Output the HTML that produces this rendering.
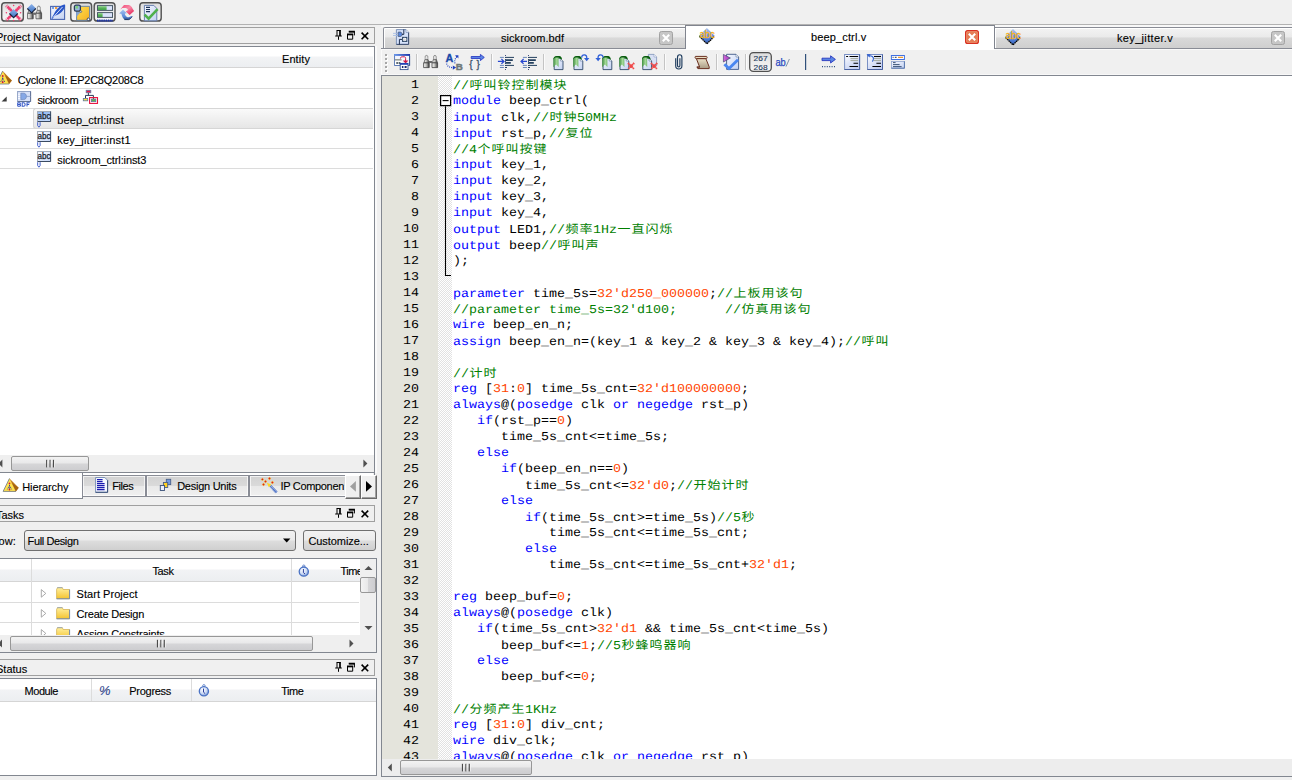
<!DOCTYPE html>
<html><head><meta charset="utf-8"><title>Quartus II</title><style>
*{box-sizing:border-box;margin:0;padding:0}
html,body{width:1292px;height:780px;overflow:hidden;background:#f0f0f0}
body{position:relative;font-family:"Liberation Sans",sans-serif;font-size:11px;color:#000}
.a{position:absolute}
.t{position:absolute;white-space:pre;line-height:14px;height:14px;font-size:11px;-webkit-text-stroke:0.12px #000}
.hl{position:absolute;height:1px}
.vl{position:absolute;width:1px}
.code{position:absolute;left:453px;white-space:pre;font-family:"Liberation Mono",monospace;font-size:13.333px;line-height:16px;height:16px;color:#000;transform:scaleY(0.9);transform-origin:0 11px;text-rendering:geometricPrecision}
.ln{position:absolute;left:383px;width:36px;text-align:right;white-space:pre;font-family:"Liberation Mono",monospace;font-size:13.333px;line-height:16px;height:16px;color:#000;transform:scaleY(0.9);transform-origin:0 11px;text-rendering:geometricPrecision}
.k{color:#0000ff}.c{color:#008000}.n{color:#ff4500}
.z{display:inline-block;width:14px;text-align:center;font-family:"Liberation Mono","Noto Sans CJK SC",monospace;font-size:13px;line-height:16px}
.hdr{position:absolute;background:linear-gradient(#fff 0,#fff 45%,#f2f3f5 50%,#eceef1 100%)}
.thumb{position:absolute;border:1px solid #979797;border-radius:2px;background:linear-gradient(#f3f3f3 0,#e8e8e9 48%,#d6d6d8 52%,#cdcdd0 100%)}
.vthumb{position:absolute;border:1px solid #979797;border-radius:2px;background:linear-gradient(90deg,#f3f3f3 0,#e8e8e9 48%,#d6d6d8 52%,#cdcdd0 100%)}
.tab{position:absolute;border:1px solid #898c95;border-bottom:none;background:linear-gradient(#f3f3f3 0,#eaeaea 43%,#d9d9d9 47%,#cecece 100%);box-shadow:inset 1px 1px 0 #fff}
.btab{position:absolute;border:1px solid #898c95;background:linear-gradient(#d2d2d2 0,#dadada 48%,#e9e9e9 52%,#f0f0f0 100%);box-shadow:inset 1px 1px 0 rgba(255,255,255,.7),inset -1px -1px 0 rgba(255,255,255,.7)}
svg{position:absolute;overflow:visible}
</style></head><body><div class="hl" style="left:0px;top:24px;width:1292px;background:#b2b2b2"></div><div class="a" style="left:-2px;top:27px;width:377px;height:17px;border:1px solid #a0a0a0;"></div><div class="t" style="left:-4px;top:30px;">Project Navigator</div><svg class="a" style="left:335px;top:30px" width="36" height="11" viewBox="0 0 36 11"><path d="M1.9 0.5h3.6M2 0v6M0.2 6h6.6M3.5 6.4v3.4" stroke="#000" stroke-width="1" fill="none"/><path d="M5 0v6" stroke="#000" stroke-width="1.7" fill="none"/><path d="M14.2 1.8h5.2v3.6M12.5 4.6h5.2v4.6h-5.2z" stroke="#000" stroke-width="1" fill="none"/><path d="M13.7 1.6h6.2M12 4.4h6.2" stroke="#000" stroke-width="1.8" fill="none"/><path d="M26.6 2.6l6.6 6.6M33.2 2.6l-6.6 6.6" stroke="#000" stroke-width="1.6" fill="none"/></svg><div class="a" style="left:-2px;top:46px;width:377px;height:427px;border:1px solid #828790;background:#fff"></div><div class="hdr" style="left:0px;top:47px;width:373px;height:20px;"></div><div class="hl" style="left:0px;top:67px;width:373px;background:#d5d5d5"></div><div class="t" style="left:282px;top:52px;letter-spacing:0.082px;">Entity</div><div class="hl" style="left:0px;top:88px;width:373px;background:#dcdcdc"></div><div class="hl" style="left:0px;top:108px;width:373px;background:#dcdcdc"></div><div class="hl" style="left:0px;top:128px;width:373px;background:#dcdcdc"></div><div class="hl" style="left:0px;top:148px;width:373px;background:#dcdcdc"></div><div class="hl" style="left:0px;top:168px;width:373px;background:#dcdcdc"></div><div class="a" style="left:33px;top:108px;width:340px;height:21px;border:1px solid #d6d6d6;border-right:none;border-radius:3px 0 0 3px;background:linear-gradient(#fafafa,#e6e6e6)"></div><div class="t" style="left:17.8px;top:73px;letter-spacing:-0.232px;">Cyclone II: EP2C8Q208C8</div><div class="t" style="left:37.5px;top:93px;letter-spacing:-0.4px;">sickroom</div><div class="t" style="left:57.3px;top:113px;letter-spacing:0.077px;">beep_ctrl:inst</div><div class="t" style="left:57.3px;top:133px;letter-spacing:0.2px;">key_jitter:inst1</div><div class="t" style="left:57.3px;top:153px;letter-spacing:-0.109px;">sickroom_ctrl:inst3</div><div class="a" style="left:0px;top:455px;width:374px;height:17px;background:#efefef"></div><div class="thumb" style="left:11px;top:456px;width:78px;height:15px;"></div><div class="a" style="left:83px;top:473px;width:290px;height:2px;background:#fff"></div><div class="hl" style="left:0px;top:472px;width:373px;background:#828790"></div><div class="vl" style="left:374px;top:472px;height:3px;background:#828790"></div><div class="a" style="left:-2px;top:473px;width:85px;height:26px;border:1px solid #828790;border-top:none;background:#fff"></div><div class="btab" style="left:82px;top:475px;width:64px;height:22px;"></div><div class="btab" style="left:146px;top:475px;width:103px;height:22px;"></div><div class="btab" style="left:249px;top:475px;width:97px;height:22px;border-right:none"></div><div class="t" style="left:22.3px;top:480px;letter-spacing:-0.118px;">Hierarchy</div><div class="t" style="left:112.3px;top:479px;letter-spacing:-0.445px;">Files</div><div class="t" style="left:177.2px;top:479px;letter-spacing:-0.263px;">Design Units</div><div class="t" style="left:280.5px;top:479px;letter-spacing:-0.324px;">IP Componen</div><div class="a" style="left:345px;top:475px;width:16px;height:24px;background:#f0f0f0;border-top:1px solid #fff;border-left:1px solid #fff;border-right:1px solid #696969;border-bottom:1px solid #696969"></div><div class="a" style="left:346px;top:476px;width:14px;height:22px;border-right:1px solid #a0a0a0;border-bottom:1px solid #a0a0a0"></div><div class="a" style="left:361px;top:475px;width:16px;height:24px;background:#f0f0f0;border-top:1px solid #fff;border-left:1px solid #fff;border-right:1px solid #696969;border-bottom:1px solid #696969"></div><div class="a" style="left:362px;top:476px;width:14px;height:22px;border-right:1px solid #a0a0a0;border-bottom:1px solid #a0a0a0"></div><div class="a" style="left:375px;top:46px;width:2px;height:427px;background:#fafafa"></div><div class="a" style="left:-2px;top:505px;width:377px;height:17px;border:1px solid #a0a0a0;"></div><div class="t" style="left:-4px;top:508px;">Tasks</div><svg class="a" style="left:335px;top:508px" width="36" height="11" viewBox="0 0 36 11"><path d="M1.9 0.5h3.6M2 0v6M0.2 6h6.6M3.5 6.4v3.4" stroke="#000" stroke-width="1" fill="none"/><path d="M5 0v6" stroke="#000" stroke-width="1.7" fill="none"/><path d="M14.2 1.8h5.2v3.6M12.5 4.6h5.2v4.6h-5.2z" stroke="#000" stroke-width="1" fill="none"/><path d="M13.7 1.6h6.2M12 4.4h6.2" stroke="#000" stroke-width="1.8" fill="none"/><path d="M26.6 2.6l6.6 6.6M33.2 2.6l-6.6 6.6" stroke="#000" stroke-width="1.6" fill="none"/></svg><div class="t" style="left:-1.5px;top:534px;letter-spacing:0.128px;">ow:</div><div class="a" style="left:24px;top:530px;width:272px;height:21px;border:1px solid #707070;border-radius:3px;background:linear-gradient(#f2f2f2 0,#ebebeb 48%,#dddddd 52%,#cfcfcf 100%)"></div><div class="t" style="left:27.6px;top:534px;letter-spacing:-0.384px;">Full Design</div><div class="a" style="left:303px;top:530px;width:73px;height:21px;border:1px solid #707070;border-radius:3px;background:linear-gradient(#f2f2f2 0,#ebebeb 48%,#dddddd 52%,#cfcfcf 100%)"></div><div class="t" style="left:308.4px;top:534px;letter-spacing:-0.061px;">Customize...</div><div class="a" style="left:-2px;top:558px;width:379px;height:95px;border:1px solid #828790;background:#fff"></div><div class="hdr" style="left:0px;top:559px;width:360px;height:22px;"></div><div class="hl" style="left:0px;top:581px;width:360px;background:#d5d5d5"></div><div class="vl" style="left:31px;top:559px;height:76px;background:#dcdcdc"></div><div class="vl" style="left:291px;top:559px;height:76px;background:#dcdcdc"></div><div class="hl" style="left:0px;top:602px;width:359px;background:#dcdcdc"></div><div class="hl" style="left:0px;top:622px;width:359px;background:#dcdcdc"></div><div class="t" style="left:152.5px;top:564px;letter-spacing:-0.404px;">Task</div><div class="t" style="left:340.4px;top:564px;letter-spacing:-0.509px;">Time</div><div class="t" style="left:76.6px;top:587px;letter-spacing:0.037px;">Start Project</div><div class="t" style="left:76.6px;top:607px;letter-spacing:-0.216px;">Create Design</div><div class="a" style="left:0px;top:623px;width:359px;height:12px;overflow:hidden"><div class="t" style="left:76.6px;top:4px;letter-spacing:-0.206px">Assign Constraints</div></div><div class="a" style="left:360px;top:559px;width:16px;height:76px;background:#efefef"></div><div class="vthumb" style="left:360px;top:577px;width:16px;height:16px;"></div><div class="a" style="left:0px;top:635px;width:376px;height:17px;background:#efefef"></div><div class="thumb" style="left:10px;top:636px;width:303px;height:15px;"></div><div class="a" style="left:-2px;top:659px;width:377px;height:17px;border:1px solid #a0a0a0;"></div><div class="t" style="left:-4px;top:662px;">Status</div><svg class="a" style="left:335px;top:662px" width="36" height="11" viewBox="0 0 36 11"><path d="M1.9 0.5h3.6M2 0v6M0.2 6h6.6M3.5 6.4v3.4" stroke="#000" stroke-width="1" fill="none"/><path d="M5 0v6" stroke="#000" stroke-width="1.7" fill="none"/><path d="M14.2 1.8h5.2v3.6M12.5 4.6h5.2v4.6h-5.2z" stroke="#000" stroke-width="1" fill="none"/><path d="M13.7 1.6h6.2M12 4.4h6.2" stroke="#000" stroke-width="1.8" fill="none"/><path d="M26.6 2.6l6.6 6.6M33.2 2.6l-6.6 6.6" stroke="#000" stroke-width="1.6" fill="none"/></svg><div class="a" style="left:-2px;top:678px;width:379px;height:98px;border:1px solid #828790;background:#fff"></div><div class="hdr" style="left:0px;top:679px;width:376px;height:22px;"></div><div class="hl" style="left:0px;top:701px;width:376px;background:#d5d5d5"></div><div class="vl" style="left:91px;top:679px;height:22px;background:#dcdcdc"></div><div class="vl" style="left:191px;top:679px;height:22px;background:#dcdcdc"></div><div class="t" style="left:24.5px;top:684px;letter-spacing:-0.429px;">Module</div><div class="t" style="left:129.3px;top:684px;letter-spacing:-0.289px;">Progress</div><div class="t" style="left:281.3px;top:684px;letter-spacing:-0.509px;">Time</div><div class="t" style="left:99px;top:684px;color:#3a55b0;font-style:italic;font-size:13px">%</div><div class="a" style="left:381px;top:25px;width:911px;height:2px;background:#f8f8f8"></div><div class="tab" style="left:383px;top:27px;width:303px;height:22px;border-radius:2px 0 0 0"></div><div class="tab" style="left:994px;top:27px;width:300px;height:22px;"></div><div class="hl" style="left:381px;top:48px;width:911px;background:#898c95"></div><div class="a" style="left:685px;top:25px;width:310px;height:25px;border:1px solid #80848e;border-bottom:none;background:#fff"></div><div class="t" style="left:501px;top:31px;letter-spacing:0.054px;">sickroom.bdf</div><div class="t" style="left:811px;top:30px;letter-spacing:0.136px;">beep_ctrl.v</div><div class="t" style="left:1117px;top:31px;letter-spacing:0.336px;">key_jitter.v</div><div class="a" style="left:381px;top:49px;width:911px;height:26px;background:#f0f0f0"></div><div class="a" style="left:381px;top:49px;width:911px;height:1px;background:#fafafa"></div><div class="a" style="left:381px;top:49px;width:1px;height:25px;background:#fafafa"></div><div class="a" style="left:686px;top:49px;width:308px;height:1px;background:#fff"></div><div class="a" style="left:381px;top:74px;width:911px;height:1px;background:#f8f8f8"></div><div class="a" style="left:381px;top:75px;width:913px;height:702px;border:1px solid #828790;background:#fff"></div><div class="a" style="left:382px;top:76px;width:56px;height:683px;background:#e4e4dc"></div><div class="a" style="left:438px;top:76px;width:14px;height:683px;background:repeating-conic-gradient(#e2e2e2 0 25%,#ffffff 0 50%) 0 0/2px 2px"></div><div class="a" style="left:382px;top:759px;width:910px;height:17px;background:#ededed"></div><div class="thumb" style="left:400px;top:760px;width:132px;height:15px;"></div><div class="a" style="left:382px;top:76px;width:910px;height:683px;overflow:hidden;left:0;top:0;width:1292px;height:759px;background:none"><div class="ln" style="top:78px">1</div><div class="code" style="top:78px"><span class="c">//<span class="z">呼</span><span class="z">叫</span><span class="z">铃</span><span class="z">控</span><span class="z">制</span><span class="z">模</span><span class="z">块</span></span></div><div class="ln" style="top:94px">2</div><div class="code" style="top:94px"><span class="k">module</span> beep_ctrl(</div><div class="ln" style="top:110px">3</div><div class="code" style="top:110px"><span class="k">input</span> clk,<span class="c">//<span class="z">时</span><span class="z">钟</span>50MHz</span></div><div class="ln" style="top:126px">4</div><div class="code" style="top:126px"><span class="k">input</span> rst_p,<span class="c">//<span class="z">复</span><span class="z">位</span></span></div><div class="ln" style="top:142px">5</div><div class="code" style="top:142px"><span class="c">//4<span class="z">个</span><span class="z">呼</span><span class="z">叫</span><span class="z">按</span><span class="z">键</span></span></div><div class="ln" style="top:158px">6</div><div class="code" style="top:158px"><span class="k">input</span> key_1,</div><div class="ln" style="top:174px">7</div><div class="code" style="top:174px"><span class="k">input</span> key_2,</div><div class="ln" style="top:190px">8</div><div class="code" style="top:190px"><span class="k">input</span> key_3,</div><div class="ln" style="top:206px">9</div><div class="code" style="top:206px"><span class="k">input</span> key_4,</div><div class="ln" style="top:222px">10</div><div class="code" style="top:222px"><span class="k">output</span> LED1,<span class="c">//<span class="z">频</span><span class="z">率</span>1Hz<span class="z">一</span><span class="z">直</span><span class="z">闪</span><span class="z">烁</span></span></div><div class="ln" style="top:238px">11</div><div class="code" style="top:238px"><span class="k">output</span> beep<span class="c">//<span class="z">呼</span><span class="z">叫</span><span class="z">声</span></span></div><div class="ln" style="top:254px">12</div><div class="code" style="top:254px">);</div><div class="ln" style="top:270px">13</div><div class="ln" style="top:286px">14</div><div class="code" style="top:286px"><span class="k">parameter</span> time_5s=<span class="n">32&#x27;d250_000000</span>;<span class="c">//<span class="z">上</span><span class="z">板</span><span class="z">用</span><span class="z">该</span><span class="z">句</span></span></div><div class="ln" style="top:302px">15</div><div class="code" style="top:302px"><span class="c">//parameter time_5s=32&#x27;d100;      //<span class="z">仿</span><span class="z">真</span><span class="z">用</span><span class="z">该</span><span class="z">句</span></span></div><div class="ln" style="top:318px">16</div><div class="code" style="top:318px"><span class="k">wire</span> beep_en_n;</div><div class="ln" style="top:334px">17</div><div class="code" style="top:334px"><span class="k">assign</span> beep_en_n=(key_1 &amp; key_2 &amp; key_3 &amp; key_4);<span class="c">//<span class="z">呼</span><span class="z">叫</span></span></div><div class="ln" style="top:350px">18</div><div class="ln" style="top:366px">19</div><div class="code" style="top:366px"><span class="c">//<span class="z">计</span><span class="z">时</span></span></div><div class="ln" style="top:382px">20</div><div class="code" style="top:382px"><span class="k">reg</span> [<span class="n">31</span>:<span class="n">0</span>] time_5s_cnt=<span class="n">32&#x27;d100000000</span>;</div><div class="ln" style="top:398px">21</div><div class="code" style="top:398px"><span class="k">always</span>@(<span class="k">posedge</span> clk <span class="k">or</span> <span class="k">negedge</span> rst_p)</div><div class="ln" style="top:414px">22</div><div class="code" style="top:414px">   <span class="k">if</span>(rst_p==<span class="n">0</span>)</div><div class="ln" style="top:430px">23</div><div class="code" style="top:430px">      time_5s_cnt&lt;=time_5s;</div><div class="ln" style="top:446px">24</div><div class="code" style="top:446px">   <span class="k">else</span></div><div class="ln" style="top:462px">25</div><div class="code" style="top:462px">      <span class="k">if</span>(beep_en_n==<span class="n">0</span>)</div><div class="ln" style="top:478px">26</div><div class="code" style="top:478px">         time_5s_cnt&lt;=<span class="n">32&#x27;d0</span>;<span class="c">//<span class="z">开</span><span class="z">始</span><span class="z">计</span><span class="z">时</span></span></div><div class="ln" style="top:494px">27</div><div class="code" style="top:494px">      <span class="k">else</span></div><div class="ln" style="top:510px">28</div><div class="code" style="top:510px">         <span class="k">if</span>(time_5s_cnt&gt;=time_5s)<span class="c">//5<span class="z">秒</span></span></div><div class="ln" style="top:526px">29</div><div class="code" style="top:526px">            time_5s_cnt&lt;=time_5s_cnt;</div><div class="ln" style="top:542px">30</div><div class="code" style="top:542px">         <span class="k">else</span></div><div class="ln" style="top:558px">31</div><div class="code" style="top:558px">            time_5s_cnt&lt;=time_5s_cnt+<span class="n">32&#x27;d1</span>;</div><div class="ln" style="top:574px">32</div><div class="ln" style="top:590px">33</div><div class="code" style="top:590px"><span class="k">reg</span> beep_buf=<span class="n">0</span>;</div><div class="ln" style="top:606px">34</div><div class="code" style="top:606px"><span class="k">always</span>@(<span class="k">posedge</span> clk)</div><div class="ln" style="top:622px">35</div><div class="code" style="top:622px">   <span class="k">if</span>(time_5s_cnt&gt;<span class="n">32&#x27;d1</span> &amp;&amp; time_5s_cnt&lt;time_5s)</div><div class="ln" style="top:638px">36</div><div class="code" style="top:638px">      beep_buf&lt;=<span class="n">1</span>;<span class="c">//5<span class="z">秒</span><span class="z">蜂</span><span class="z">鸣</span><span class="z">器</span><span class="z">响</span></span></div><div class="ln" style="top:654px">37</div><div class="code" style="top:654px">   <span class="k">else</span></div><div class="ln" style="top:670px">38</div><div class="code" style="top:670px">      beep_buf&lt;=<span class="n">0</span>;</div><div class="ln" style="top:686px">39</div><div class="ln" style="top:702px">40</div><div class="code" style="top:702px"><span class="c">//<span class="z">分</span><span class="z">频</span><span class="z">产</span><span class="z">生</span>1KHz</span></div><div class="ln" style="top:718px">41</div><div class="code" style="top:718px"><span class="k">reg</span> [<span class="n">31</span>:<span class="n">0</span>] div_cnt;</div><div class="ln" style="top:734px">42</div><div class="code" style="top:734px"><span class="k">wire</span> div_clk;</div><div class="ln" style="top:750px">43</div><div class="code" style="top:750px"><span class="k">always</span>@(<span class="k">posedge</span> clk <span class="k">or</span> <span class="k">negedge</span> rst_p)</div></div><svg class="a" style="left:0;top:0" width="1292" height="780" viewBox="0 0 1292 780"><defs><linearGradient id="gBlueD" x1="0" y1="0" x2="0" y2="1"><stop offset="0" stop-color="#8fb4ea"/><stop offset="1" stop-color="#3f73c4"/></linearGradient><linearGradient id="gBtn" x1="0" y1="0" x2="0" y2="1"><stop offset="0" stop-color="#dcdcdc"/><stop offset="0.5" stop-color="#ececec"/><stop offset="1" stop-color="#f6f6f6"/></linearGradient><linearGradient id="gYel" x1="0" y1="0" x2="1" y2="1"><stop offset="0" stop-color="#ffe050"/><stop offset="1" stop-color="#f6b020"/></linearGradient><linearGradient id="gDoc" x1="0" y1="0" x2="1" y2="1"><stop offset="0" stop-color="#f4f7ff"/><stop offset="1" stop-color="#c4d2f2"/></linearGradient><linearGradient id="gBar" x1="0" y1="0" x2="1" y2="0"><stop offset="0" stop-color="#f4f4f4"/><stop offset="0.5" stop-color="#c8c8c8"/><stop offset="1" stop-color="#808080"/></linearGradient><linearGradient id="gGreen" x1="0" y1="0" x2="0" y2="1"><stop offset="0" stop-color="#8fd08a"/><stop offset="1" stop-color="#2f9a35"/></linearGradient><linearGradient id="gFold" x1="0" y1="0" x2="0" y2="1"><stop offset="0" stop-color="#fff0a0"/><stop offset="1" stop-color="#f4c430"/></linearGradient><linearGradient id="gTri" x1="0" y1="0" x2="1" y2="0"><stop offset="0" stop-color="#ffe860"/><stop offset="0.55" stop-color="#f4b830"/><stop offset="1" stop-color="#b06a10"/></linearGradient><radialGradient id="gClock" cx="0.4" cy="0.35" r="0.7"><stop offset="0" stop-color="#ffffff"/><stop offset="0.6" stop-color="#c8d8f4"/><stop offset="1" stop-color="#6a8cd0"/></radialGradient><linearGradient id="gAbcD" x1="0" y1="0" x2="0" y2="1"><stop offset="0" stop-color="#a8c6f2"/><stop offset="0.75" stop-color="#4a7ad4"/><stop offset="1" stop-color="#3a62b8"/></linearGradient><linearGradient id="gBar2" x1="0" y1="0" x2="1" y2="0"><stop offset="0" stop-color="#ffffff"/><stop offset="0.45" stop-color="#c4c4c0"/><stop offset="0.8" stop-color="#707070"/><stop offset="1" stop-color="#303030"/></linearGradient><linearGradient id="gRedA" x1="0" y1="0" x2="1" y2="1"><stop offset="0" stop-color="#f04a78"/><stop offset="0.45" stop-color="#f88aa6"/><stop offset="1" stop-color="#e01048"/></linearGradient><linearGradient id="gBluA" x1="0" y1="0" x2="0" y2="1"><stop offset="0" stop-color="#a8c6f2"/><stop offset="0.7" stop-color="#5a88d8"/><stop offset="1" stop-color="#2a4a88"/></linearGradient><linearGradient id="gAbc" x1="0" y1="0" x2="0" y2="1"><stop offset="0" stop-color="#94baf2"/><stop offset="1" stop-color="#c4dafb"/></linearGradient><linearGradient id="gAbc2" x1="0" y1="0" x2="1" y2="1"><stop offset="0" stop-color="#ffffff"/><stop offset="1" stop-color="#c4d6f8"/></linearGradient><linearGradient id="gTitle" x1="0" y1="0" x2="1" y2="0"><stop offset="0" stop-color="#6a98ec"/><stop offset="1" stop-color="#1c34a8"/></linearGradient><linearGradient id="gRib" x1="0" y1="0" x2="1" y2="0"><stop offset="0" stop-color="#3f8f40"/><stop offset="0.4" stop-color="#a4d898"/><stop offset="1" stop-color="#2a8a30"/></linearGradient><linearGradient id="gTan" x1="0" y1="0" x2="0" y2="1"><stop offset="0" stop-color="#ece2c8"/><stop offset="1" stop-color="#a89a84"/></linearGradient><linearGradient id="gPur" x1="0" y1="0" x2="1" y2="0"><stop offset="0" stop-color="#d868e0"/><stop offset="1" stop-color="#9038b0"/></linearGradient><linearGradient id="gPane" x1="0" y1="0" x2="0.6" y2="1"><stop offset="0" stop-color="#ffffff"/><stop offset="1" stop-color="#c4d0f2"/></linearGradient></defs><rect x="1.7000000000000002" y="2.8000000000000003" width="21.6" height="18.3" rx="3.2" fill="url(#gBtn)" stroke="#545454" stroke-width="1.45"/><g stroke="#f0366a" fill="none"><path d="M7.4 6.6L20 19.2M20 6.6L7.4 19.2" stroke-width="2.3" opacity="0.92"/><path d="M6.2 5.6L21.2 20.4M21.2 5.6L6.2 20.4" stroke-width="3.4" stroke-dasharray="0.9 1.1" opacity="0.7"/></g><g fill="#f0366a"><circle cx="13.6" cy="5.5" r="0.75"/><circle cx="13.6" cy="20.6" r="0.75"/><circle cx="6.4" cy="12.8" r="0.75"/><circle cx="20.6" cy="12.8" r="0.75"/></g><path d="M13.6 9.0L17.8 13.2L13.6 17.4L9.399999999999999 13.2z" fill="url(#gBlueD)"/><path d="M9.399999999999999 13.5L13.6 17.7L17.8 13.5" fill="none" stroke="#16233f" stroke-width="1.1"/><path d="M27.6 13.2h5.6v5.6h-5.6z" fill="url(#gBar2)" stroke="#4a4a4a" stroke-width="0.8"/><path d="M27.900000000000002 13l0.9-2.6h3.2l0.9 2.6z" fill="url(#gBar2)" stroke="#4a4a4a" stroke-width="0.7"/><path d="M36 13.2h5.6v5.6h-5.6z" fill="url(#gBar2)" stroke="#4a4a4a" stroke-width="0.8"/><path d="M36.3 13l0.9-2.6h3.2l0.9 2.6z" fill="url(#gBar2)" stroke="#4a4a4a" stroke-width="0.7"/><path d="M37.4 10.2V7.4c0-1.8 2.8-1.8 2.8 0v2.8z" fill="#e8e8e8" stroke="#5a5a5a" stroke-width="0.7"/><path d="M37.4 9h2.8" stroke="#fff" stroke-width="0.8"/><rect x="33.2" y="12.6" width="2.8" height="2.2" fill="#6a6a6a"/><path d="M31.6 3.8999999999999995L35.9 8.2L31.6 12.5L27.3 8.2z" fill="url(#gBlueD)"/><path d="M27.3 8.5L31.6 12.8L35.9 8.5" fill="none" stroke="#16233f" stroke-width="1.1"/><rect x="50.6" y="6.4" width="14" height="13" fill="url(#gDoc)" stroke="#4a66b0" stroke-width="1.1"/><rect x="52" y="7.2" width="2" height="1.6" fill="#5a8ae0"/><rect x="55" y="7.2" width="2.2" height="1.6" fill="#f08a10"/><path d="M65 4.6c-4.5 0.4-8.3 4.2-11 9.4l-2.6 4.6 1.2 0.2 2-2.8c4.8-1.2 9.6-5.4 10.6-10.2z" fill="#2a56c8"/><path d="M53 17.5L62.5 7" stroke="#e8eeff" stroke-width="0.9" fill="none"/><rect x="70.8" y="2.8000000000000003" width="20.8" height="18.3" rx="3.2" fill="url(#gBtn)" stroke="#545454" stroke-width="1.45"/><path d="M76.6 6.3h13v11.4l-2.4 2.6h-10.6z" fill="url(#gYel)" stroke="#5a7aa8" stroke-width="0.9"/><path d="M76.2 11.5l4.6 0.4-4.6 5.2z" fill="#7aa0d8" opacity="0.9"/><rect x="74.4" y="5.2" width="6" height="6" rx="1.6" fill="#9ab8e0" stroke="#2a3c5c" stroke-width="1.3"/><rect x="75.5" y="6" width="2.6" height="2.6" fill="#7ed07a"/><circle cx="88.4" cy="19.3" r="1.3" fill="#fff" stroke="#2a3c5c" stroke-width="0.9"/><circle cx="80.8" cy="11.6" r="0.9" fill="#fff" stroke="#2a3c5c" stroke-width="0.6"/><rect x="94.19999999999999" y="2.8000000000000003" width="20.8" height="18.3" rx="3.2" fill="url(#gBtn)" stroke="#545454" stroke-width="1.45"/><rect x="97.5" y="5.6" width="15" height="4.8" fill="#dbe4fb" stroke="#4a5a68" stroke-width="1"/><rect x="98" y="6.1" width="8.6" height="3.8" fill="url(#gGreen)"/><rect x="97.5" y="12.6" width="15" height="4.8" fill="#dbe4fb" stroke="#4a5a68" stroke-width="1"/><rect x="98" y="13.1" width="4.6" height="3.8" fill="url(#gGreen)"/><path d="M97 20.4h15.8" stroke="#1c3cc0" stroke-width="1.8" stroke-dasharray="1.3 0.9"/><path d="M97 21h15.8" stroke="#1c2c90" stroke-width="0.9"/><path d="M120.8 8.8L124 5.1h4.7c2.2 0.6 3.4 2 3.9 3.6l1.5 2.2-4.4 4-4.1-3.5 2.4-1.4c-0.6-1.4-1.6-2-3-2h-2c-0.8 0-1.6 0.6-2.2 1.4z" fill="url(#gRedA)"/><path d="M123 9.6l3.8 3.7-2 0.2c0.2 1.6 1 2.8 2.2 3.4 1.4 0.6 3 0.2 4.4-0.8l0.8 0.4c-1 2-2.4 3-3.6 3.3h-3.8c-1.6-1-2.8-3.2-3.4-6l-2.2-0.3z" fill="url(#gBluA)"/><path d="M124.4 19.6h4.2c1.4-0.4 2.8-1.6 3.6-3.2" stroke="#1c3460" stroke-width="0.9" fill="none"/><rect x="139.79999999999998" y="2.8000000000000003" width="21.400000000000002" height="18.3" rx="3.2" fill="url(#gBtn)" stroke="#545454" stroke-width="1.45"/><path d="M144.4 5.4h9.4l3 3v12.4h-12.4z" fill="url(#gDoc)" stroke="#5a74a8" stroke-width="0.9"/><path d="M146 7.4h4M146 9.5h4M146 11.6h4" stroke="#1e3458" stroke-width="1.1"/><path d="M144.6 14.6l4 4 9-9.4" stroke="#4fb04c" stroke-width="2.6" fill="none" stroke-linejoin="miter"/><path d="M9.5 478.4L3.1 491.4L15.9 491.4z" fill="url(#gTri)"/><path d="M9.5 478.4L3.1 491.4L15.9 491.4z" fill="#ffe24a"/><path d="M9.5 478.4L15.9 491.4L18.7 487.8z" fill="#c07a18"/><path d="M12.0 483.0L15.9 491.4L18.7 487.8z" fill="#9a5a10" opacity="0.7"/><path d="M9.5 478.4L3.1 491.4L15.9 491.4" fill="none" stroke="#6a7890" stroke-width="0.8"/><path d="M9.5 483.2V489.6M9.5 485.5L7.3 489.6M9.5 485.5L11.7 489.6" stroke="#2a3a9a" stroke-width="0.9" fill="none" stroke-dasharray="1 0.7"/><circle cx="9.5" cy="483.3" r="0.9" fill="#e0103a"/><circle cx="9.5" cy="489.6" r="0.9" fill="#e0103a"/><path d="M2.7 71.0L-3.7 84.0L9.1 84.0z" fill="url(#gTri)"/><path d="M2.7 71.0L-3.7 84.0L9.1 84.0z" fill="#ffe24a"/><path d="M2.7 71.0L9.1 84.0L11.9 80.4z" fill="#c07a18"/><path d="M5.2 75.6L9.1 84.0L11.9 80.4z" fill="#9a5a10" opacity="0.7"/><path d="M2.7 71.0L-3.7 84.0L9.1 84.0" fill="none" stroke="#6a7890" stroke-width="0.8"/><path d="M2.7 75.8V82.2M2.7 78.1L0.5 82.2M2.7 78.1L4.9 82.2" stroke="#2a3a9a" stroke-width="0.9" fill="none" stroke-dasharray="1 0.7"/><circle cx="2.7" cy="75.9" r="0.9" fill="#e0103a"/><circle cx="2.7" cy="82.2" r="0.9" fill="#e0103a"/><path d="M6.7 96.4V101.6H1.6z" fill="#3c3c3c"/><rect x="17.6" y="91.5" width="13" height="10" fill="#d6e0f8" stroke="#8a9cc0" stroke-width="0.9"/><path d="M30.6 91.5V101.5H17.6" fill="none" stroke="#5a6c90" stroke-width="0.9"/><path d="M18 94.2h3M18 96.4h3M18 98.6h3" stroke="#fff" stroke-width="0.9"/><path d="M26.5 96.4h4" stroke="#8aa0c8" stroke-width="0.9"/><path d="M20.8 93.2h2.8c3.8 0 3.8 6.4 0 6.4h-2.8z" fill="#86a8e6" stroke="#6a84b8" stroke-width="0.7"/><path d="M17.7 102.6v3.7M17.7 102.7h1.7c1.3 0 1.3 1.8 0 1.8h-1.7M19.4 104.5c1.5 0 1.5 1.8 0 1.8h-1.7M22.2 102.7v3.6h1.3c2.2 0 2.2-3.6 0-3.6zM27 106.4v-3.7h2.8M27 104.5h2.2" stroke="#3558c8" stroke-width="1.05" fill="none"/><path d="M88.4 92.5V95.4M85.5 98.4V95.4H93.4V99" stroke="#283c58" stroke-width="1" fill="none"/><rect x="86.2" y="90.3" width="4.6" height="2.5" fill="#e81848" stroke="#6078a0" stroke-width="0.8"/><rect x="83.3" y="98.4" width="4.4" height="2.4" fill="#f8e040" stroke="#6078a0" stroke-width="0.8"/><rect x="91.4" y="99.1" width="4.4" height="2.5" fill="#58b848" stroke="#6078a0" stroke-width="0.8"/><rect x="89.6" y="97.6" width="7.9" height="5.8" fill="none" stroke="#e8103c" stroke-width="1.1"/><rect x="37.6" y="111.5" width="13" height="10" fill="url(#gAbc)" stroke="#9aa4b4" stroke-width="0.9"/><path d="M50.6 111.5V121.5H37.6" fill="none" stroke="#3a4a62" stroke-width="1"/><text x="37.5" y="119.4" font-family="Liberation Sans,sans-serif" font-size="8.8" fill="#182028" stroke="#182028" stroke-width="0.25" textLength="13" lengthAdjust="spacingAndGlyphs">abc</text><path d="M37.7 122.2v3.4l1.2 1.6 1.2-1.6v-3.4" stroke="#3050c8" stroke-width="0.9" fill="none"/><rect x="37.6" y="131.5" width="13" height="10" fill="url(#gAbc2)" stroke="#9aa4b4" stroke-width="0.9"/><path d="M50.6 131.5V141.5H37.6" fill="none" stroke="#3a4a62" stroke-width="1"/><text x="37.5" y="139.4" font-family="Liberation Sans,sans-serif" font-size="8.8" fill="#182028" stroke="#182028" stroke-width="0.25" textLength="13" lengthAdjust="spacingAndGlyphs">abc</text><path d="M37.7 142.2v3.4l1.2 1.6 1.2-1.6v-3.4" stroke="#3050c8" stroke-width="0.9" fill="none"/><rect x="37.6" y="151.5" width="13" height="10" fill="url(#gAbc2)" stroke="#9aa4b4" stroke-width="0.9"/><path d="M50.6 151.5V161.5H37.6" fill="none" stroke="#3a4a62" stroke-width="1"/><text x="37.5" y="159.4" font-family="Liberation Sans,sans-serif" font-size="8.8" fill="#182028" stroke="#182028" stroke-width="0.25" textLength="13" lengthAdjust="spacingAndGlyphs">abc</text><path d="M37.7 162.2v3.4l1.2 1.6 1.2-1.6v-3.4" stroke="#3050c8" stroke-width="0.9" fill="none"/><path d="M-1.6 463.5l4.0 -4.0v8.0z" fill="#505050"/><path d="M367.4 463.5l-4.0 -4.0v8.0z" fill="#505050"/><path d="M-2 643.5l4.0 -4.0v8.0z" fill="#505050"/><path d="M353.5 643.5l-4.0 -4.0v8.0z" fill="#505050"/><path d="M368.5 566l-4.0 4.0h8.0z" fill="#505050"/><path d="M368.5 630l-4.0 -4.0h8.0z" fill="#505050"/><path d="M387.8 767.5l4.0 -4.0v8.0z" fill="#505050"/><rect x="46.1" y="459.79999999999995" width="1.2" height="7.6" fill="#4a4a4a"/><rect x="47.300000000000004" y="460.2" width="0.9" height="7.2" fill="#f8f8f8" opacity="0.8"/><rect x="49.5" y="459.79999999999995" width="1.2" height="7.6" fill="#4a4a4a"/><rect x="50.7" y="460.2" width="0.9" height="7.2" fill="#f8f8f8" opacity="0.8"/><rect x="52.9" y="459.79999999999995" width="1.2" height="7.6" fill="#4a4a4a"/><rect x="54.1" y="460.2" width="0.9" height="7.2" fill="#f8f8f8" opacity="0.8"/><rect x="156.9" y="639.8" width="1.2" height="7.6" fill="#4a4a4a"/><rect x="158.1" y="640.1999999999999" width="0.9" height="7.2" fill="#f8f8f8" opacity="0.8"/><rect x="160.3" y="639.8" width="1.2" height="7.6" fill="#4a4a4a"/><rect x="161.5" y="640.1999999999999" width="0.9" height="7.2" fill="#f8f8f8" opacity="0.8"/><rect x="163.70000000000002" y="639.8" width="1.2" height="7.6" fill="#4a4a4a"/><rect x="164.9" y="640.1999999999999" width="0.9" height="7.2" fill="#f8f8f8" opacity="0.8"/><rect x="461.9" y="763.8" width="1.2" height="7.6" fill="#4a4a4a"/><rect x="463.1" y="764.1999999999999" width="0.9" height="7.2" fill="#f8f8f8" opacity="0.8"/><rect x="465.29999999999995" y="763.8" width="1.2" height="7.6" fill="#4a4a4a"/><rect x="466.5" y="764.1999999999999" width="0.9" height="7.2" fill="#f8f8f8" opacity="0.8"/><rect x="468.69999999999993" y="763.8" width="1.2" height="7.6" fill="#4a4a4a"/><rect x="469.9" y="764.1999999999999" width="0.9" height="7.2" fill="#f8f8f8" opacity="0.8"/><path d="M95.6 477.5h9.2l2.8 2.8v12h-12z" fill="#f4f7ff" stroke="#7088b0" stroke-width="0.9"/><path d="M107.6 480.3V492.3H95.6" fill="none" stroke="#3a5078" stroke-width="1"/><path d="M97 479.6h5.6M97 481.6h5.6M97 483.6h7.6M97 485.6h7.6M97 487.6h7.6M97 489.6h7.6" stroke="#1a1ab0" stroke-width="1.1"/><rect x="166.3" y="479.3" width="4.4" height="5.3" fill="#7098e0" stroke="#4a6088" stroke-width="0.9"/><rect x="163.4" y="482.5" width="4.3" height="5" fill="#ffd020" stroke="#4a6088" stroke-width="0.9"/><rect x="160.3" y="485.5" width="4.2" height="5" fill="#e8eeff" stroke="#3a5078" stroke-width="0.9"/><path d="M262.4 477.7l1.7 1.7l-1.7 1.7l-1.7-1.7z" fill="#f8a020"/><rect x="261.79999999999995" y="478.79999999999995" width="1.2" height="1.2" fill="#d01040"/><path d="M269.5 476.8l1.7 1.7l-1.7 1.7l-1.7-1.7z" fill="#f8a020"/><rect x="268.9" y="477.9" width="1.2" height="1.2" fill="#d01040"/><path d="M265.5 479.8l1.7 1.7l-1.7 1.7l-1.7-1.7z" fill="#f8a020"/><rect x="264.9" y="480.9" width="1.2" height="1.2" fill="#d01040"/><path d="M272.4 480.8l1.7 1.7l-1.7 1.7l-1.7-1.7z" fill="#f8a020"/><rect x="271.79999999999995" y="481.9" width="1.2" height="1.2" fill="#d01040"/><path d="M263.5 482.8l1.7 1.7l-1.7 1.7l-1.7-1.7z" fill="#f8a020"/><rect x="262.9" y="483.9" width="1.2" height="1.2" fill="#d01040"/><path d="M270.3 485.8L276.6 492.4" stroke="#2050c0" stroke-width="2.6" stroke-dasharray="0.9 0.5"/><path d="M266.8 482.8l4.6 1.6-2.6 2.8z" fill="#ffd820"/><path d="M350 486.4L355.9 481V491.8z" fill="#a0a0a0"/><path d="M372 486.4L366 481V491.8z" fill="#000"/><path d="M283 538.5h7.4l-3.7 4z" fill="#000"/><path d="M56.6 589.5l0.9-1.9h4.8l0.9 1.9h6.3v9.2h-12.9z" fill="url(#gFold)" stroke="#c8a030" stroke-width="0.6"/><path d="M69.6 589.6999999999999V598.8H56.6" fill="none" stroke="#6a86b0" stroke-width="0.9"/><path d="M57.3 587.6999999999999h5" stroke="#8aa0c8" stroke-width="0.8"/><path d="M41.3 589.5999999999999V597.1999999999999L45.8 593.4z" fill="#fff" stroke="#a0a0a0" stroke-width="0.9"/><path d="M56.6 609.5l0.9-1.9h4.8l0.9 1.9h6.3v9.2h-12.9z" fill="url(#gFold)" stroke="#c8a030" stroke-width="0.6"/><path d="M69.6 609.6999999999999V618.8H56.6" fill="none" stroke="#6a86b0" stroke-width="0.9"/><path d="M57.3 607.6999999999999h5" stroke="#8aa0c8" stroke-width="0.8"/><path d="M41.3 609.5999999999999V617.1999999999999L45.8 613.4z" fill="#fff" stroke="#a0a0a0" stroke-width="0.9"/><clipPath id="cl3"><rect x="0" y="623" width="359" height="12"/></clipPath><g clip-path="url(#cl3)"><path d="M56.6 629.5l0.9-1.9h4.8l0.9 1.9h6.3v9.2h-12.9z" fill="url(#gFold)" stroke="#c8a030" stroke-width="0.6"/><path d="M69.6 629.6999999999999V638.8H56.6" fill="none" stroke="#6a86b0" stroke-width="0.9"/><path d="M57.3 627.6999999999999h5" stroke="#8aa0c8" stroke-width="0.8"/><path d="M41.3 629.5999999999999V637.1999999999999L45.8 633.4z" fill="#fff" stroke="#a0a0a0" stroke-width="0.9"/></g><circle cx="303.8" cy="566.2" r="1.2" fill="none" stroke="#5a80c8" stroke-width="0.9"/><circle cx="303.8" cy="571.6" r="4.6" fill="url(#gClock)" stroke="#4a72c4" stroke-width="1.3"/><path d="M303.40000000000003 569.0V572.6L305.0 574.0" stroke="#2a3c9a" stroke-width="1" fill="none"/><circle cx="203.9" cy="685.8000000000001" r="1.2" fill="none" stroke="#5a80c8" stroke-width="0.9"/><circle cx="203.9" cy="691.2" r="4.6" fill="url(#gClock)" stroke="#4a72c4" stroke-width="1.3"/><path d="M203.5 688.6V692.2L205.1 693.6" stroke="#2a3c9a" stroke-width="1" fill="none"/><path d="M396.4 29.6h9.6l2.6 2.8v12h-12.2z" fill="#d6e2fa" stroke="#7088b0" stroke-width="0.9"/><path d="M408.6 32.4V44.4H396.4" fill="none" stroke="#405070" stroke-width="1"/><path d="M406 29.6v2.8h2.6" fill="#fff" stroke="#7088b0" stroke-width="0.7"/><path d="M393 33.4h5M393 35.5h5" stroke="#a8c0e8" stroke-width="0.9"/><path d="M398.2 32.1h2c2.6 0 2.6 4.4 0 4.4h-2z" fill="#5a88e0" stroke="#506078" stroke-width="0.8"/><path d="M402 34.4h1.8V29.4M402.4 39.4h-3V44.6" stroke="#203050" stroke-width="1" fill="none"/><rect x="402.6" y="37.4" width="4.2" height="4" fill="#fff" stroke="#304868" stroke-width="1.1"/><path d="M404.7 37.4v4M402.6 39.4h4.2" stroke="#c8c8c8" stroke-width="0.5"/><path d="M706.9 27.999999999999996L714.6999999999999 35.8L706.9 43.599999999999994L699.1 35.8z" fill="url(#gAbcD)"/><path d="M699.5 36.4L706.9 43.8L714.3 36.4" stroke="#000" stroke-width="1.3" fill="none" stroke-dasharray="1.6 0.5"/><text x="699.5" y="38.199999999999996" font-family="Liberation Sans,sans-serif" font-size="10.4" fill="#fab41e" stroke="#fab41e" stroke-width="0.3" textLength="15.4" lengthAdjust="spacingAndGlyphs">abc</text><path d="M1013 29.099999999999998L1020.8 36.9L1013 44.699999999999996L1005.2 36.9z" fill="url(#gAbcD)"/><path d="M1005.6 37.5L1013 44.9L1020.4 37.5" stroke="#000" stroke-width="1.3" fill="none" stroke-dasharray="1.6 0.5"/><text x="1005.6" y="39.3" font-family="Liberation Sans,sans-serif" font-size="10.4" fill="#fab41e" stroke="#fab41e" stroke-width="0.3" textLength="15.4" lengthAdjust="spacingAndGlyphs">abc</text><rect x="659.5" y="31.5" width="13" height="13" rx="2" fill="#c6c6c6" stroke="#a2a2a2" stroke-width="1"/><path d="M662.8 34.8l6.4 6.4M669.2 34.8l-6.4 6.4" stroke="#fff" stroke-width="2.1"/><rect x="965.6" y="30.6" width="12.8" height="12.8" rx="2" fill="#e47a52" stroke="#d83020" stroke-width="1.2"/><rect x="966.7" y="31.7" width="10.6" height="10.6" rx="1" fill="none" stroke="#f0a080" stroke-width="0.6"/><path d="M968.8 33.8l6.4 6.4M975.2 33.8l-6.4 6.4" stroke="#fff" stroke-width="2.1"/><rect x="1271.5" y="31.5" width="13" height="13" rx="2" fill="#c6c6c6" stroke="#a2a2a2" stroke-width="1"/><path d="M1274.8 34.8l6.4 6.4M1281.2 34.8l-6.4 6.4" stroke="#fff" stroke-width="2.1"/><rect x="386" y="55" width="2" height="2" fill="#fff"/><rect x="385" y="54" width="2" height="2" fill="#a6a6a6"/><rect x="386" y="59" width="2" height="2" fill="#fff"/><rect x="385" y="58" width="2" height="2" fill="#a6a6a6"/><rect x="386" y="63" width="2" height="2" fill="#fff"/><rect x="385" y="62" width="2" height="2" fill="#a6a6a6"/><rect x="386" y="67" width="2" height="2" fill="#fff"/><rect x="385" y="66" width="2" height="2" fill="#a6a6a6"/><rect x="386" y="71" width="2" height="2" fill="#fff"/><rect x="385" y="70" width="2" height="2" fill="#a6a6a6"/><rect x="416" y="54" width="1" height="16" fill="#c4c4c4"/><rect x="417" y="54" width="1" height="16" fill="#fbfbfb"/><rect x="491" y="54" width="1" height="16" fill="#c4c4c4"/><rect x="492" y="54" width="1" height="16" fill="#fbfbfb"/><rect x="543" y="54" width="1" height="16" fill="#c4c4c4"/><rect x="544" y="54" width="1" height="16" fill="#fbfbfb"/><rect x="664" y="54" width="1" height="16" fill="#c4c4c4"/><rect x="665" y="54" width="1" height="16" fill="#fbfbfb"/><rect x="716" y="54" width="1" height="16" fill="#c4c4c4"/><rect x="717" y="54" width="1" height="16" fill="#fbfbfb"/><rect x="745" y="54" width="1" height="16" fill="#c4c4c4"/><rect x="746" y="54" width="1" height="16" fill="#fbfbfb"/><rect x="394.6" y="54.5" width="15" height="11" fill="#f4f7ff" stroke="#5070b0" stroke-width="0.9"/><rect x="394.2" y="54" width="15.8" height="1.9" fill="url(#gTitle)"/><path d="M409.6 56V65.5" stroke="#3a5590" stroke-width="1"/><rect x="395" y="59" width="6.6" height="6" fill="#fff"/><rect x="395" y="59" width="6.6" height="1.6" fill="#9aa098"/><rect x="396.4" y="62" width="1.4" height="2" fill="#3a4a58"/><rect x="398.6" y="62" width="1.8" height="2" fill="#5a6868"/><path d="M400.4 58.6c0-1.6 1-1.8 2.4-1.8h1.4c1 0 1.4 0.6 1.4 1.6v3" stroke="#d01848" stroke-width="1" fill="none"/><path d="M402.8 60.4h5.6l-2.8 3z" fill="#d01848"/><rect x="400.2" y="63.4" width="7.8" height="6.2" fill="#fff" stroke="#3a5590" stroke-width="0.9"/><rect x="399.8" y="63" width="8.4" height="1.8" fill="#2444b4"/><rect x="401.9" y="66" width="1.5" height="2" fill="#1c2c70"/><rect x="404.6" y="66" width="2" height="2" fill="#1c2c70"/><path d="M423.6 62.8h5.6v4.8h-5.6z" fill="url(#gBar2)" stroke="#404040" stroke-width="0.8"/><path d="M424.0 62.6l1.1-3.4h2.8l1.1 3.4z" fill="url(#gBar2)" stroke="#404040" stroke-width="0.7"/><path d="M425.20000000000005 59V56.6c0-1.6 2.6-1.6 2.6 0V59z" fill="#e4e4e4" stroke="#6a6a6a" stroke-width="0.7"/><path d="M425.20000000000005 58.2h2.6" stroke="#f8f8f8" stroke-width="0.8"/><path d="M432 62.8h5.6v4.8h-5.6z" fill="url(#gBar2)" stroke="#404040" stroke-width="0.8"/><path d="M432.4 62.6l1.1-3.4h2.8l1.1 3.4z" fill="url(#gBar2)" stroke="#404040" stroke-width="0.7"/><path d="M433.6 59V56.6c0-1.6 2.6-1.6 2.6 0V59z" fill="#e4e4e4" stroke="#6a6a6a" stroke-width="0.7"/><path d="M433.6 58.2h2.6" stroke="#f8f8f8" stroke-width="0.8"/><rect x="429" y="61" width="3" height="2" fill="#6a6a6a"/><text x="445.6" y="61.8" font-family="Liberation Sans,sans-serif" font-weight="bold" font-size="10.8" fill="#1848a8" stroke="#1848a8" stroke-width="0.3">A</text><text x="455.8" y="69.7" font-family="Liberation Sans,sans-serif" font-weight="bold" font-size="9.8" fill="#6e7878" stroke="#6e7878" stroke-width="0.45">B</text><path d="M446.6 63.6c0.6 2.6 3 4 6.6 4" stroke="#2040c0" stroke-width="1.2" stroke-dasharray="1 1.1" fill="none"/><path d="M452.8 65.4l3.4 2.2-3.4 2.2z" fill="#2040c0"/><path d="M455 63.4c-0.8-2.6 0-4.8 2-6.6" stroke="#2040c0" stroke-width="1.2" stroke-dasharray="1 1.1" fill="none"/><path d="M455.2 55.2h3.2v3.2l-1-1.2-1 0.2z" fill="#2040c0"/><path d="M471.2 56.5h9.2V54.4l3.9 3-3.9 3.2v-2.1H471.2z" fill="#5a86e4" stroke="#2030c0" stroke-width="0.8"/><text x="469.2" y="68.2" font-family="Liberation Sans,sans-serif" font-size="10" fill="#3a506a" stroke="#3a506a" stroke-width="0.3">{</text><text x="476.4" y="68.2" font-family="Liberation Sans,sans-serif" font-size="10" fill="#3a506a" stroke="#3a506a" stroke-width="0.3">}</text><path d="M505.5 55v15" stroke="#405080" stroke-width="1" stroke-dasharray="1 1"/><path d="M505.2 57.4h8.8M505.2 65.4h8.8M505.2 67.5h1.8" stroke="#24405e" stroke-width="1"/><path d="M505.2 60.1h7.6M505.2 62.9h5.6" stroke="#24405e" stroke-width="1.9"/><path d="M499.9 57.4h4M499.9 65.4h4M499.9 67.5h4" stroke="#6a88b8" stroke-width="1"/><path d="M497.9 61.4h5.6M501.4 59l2.6 2.4-2.6 2.4" stroke="#2848d0" stroke-width="1.2" fill="none"/><path d="M528.5 55v15" stroke="#405080" stroke-width="1" stroke-dasharray="1 1"/><path d="M528.2 57.4h8.8M528.2 65.4h8.8M528.2 67.5h1.8" stroke="#24405e" stroke-width="1"/><path d="M528.2 60.1h7.6M528.2 62.9h5.6" stroke="#24405e" stroke-width="1.9"/><path d="M522.9 57.4h4M522.9 65.4h4M522.9 67.5h4" stroke="#6a88b8" stroke-width="1"/><path d="M521.4 61.4h5.6M523.6 59l-2.6 2.4 2.6 2.4" stroke="#2848d0" stroke-width="1.2" fill="none"/><path d="M554.2 58.4h6.2l2.6 2.6v8.6H554.2z" fill="url(#gDoc)" stroke="#304868" stroke-width="0.9"/><path d="M560.4000000000001 58.4v2.6h2.6" fill="#fff" stroke="#6078a0" stroke-width="0.6"/><path d="M553.4000000000001 67.2V59.4c0-2 1.4-3.4 3.4-3.4h2.2c1.6 0 2.8 1.4 2.8 3l0 0.6-3.2-1.4v8.8l-2.6-2.6z" fill="url(#gRib)"/><path d="M553.4000000000001 60.4V59.4c0-2 1.4-3.4 3.4-3.4h2.2c1.6 0 2.8 1.4 2.8 3.4l-3.4-2h-2.6c-1.2 0-2.4 1.4-2.4 3z" fill="#0a5a10"/><path d="M574 58.4h6.2l2.6 2.6v8.6H574z" fill="url(#gDoc)" stroke="#304868" stroke-width="0.9"/><path d="M580.2 58.4v2.6h2.6" fill="#fff" stroke="#6078a0" stroke-width="0.6"/><path d="M573.2 67.2V59.4c0-2 1.4-3.4 3.4-3.4h2.2c1.6 0 2.8 1.4 2.8 3l0 0.6-3.2-1.4v8.8l-2.6-2.6z" fill="url(#gRib)"/><path d="M573.2 60.4V59.4c0-2 1.4-3.4 3.4-3.4h2.2c1.6 0 2.8 1.4 2.8 3.4l-3.4-2h-2.6c-1.2 0-2.4 1.4-2.4 3z" fill="#0a5a10"/><path d="M581.6 57.6c0.4-3.8 5.4-3.8 5.2 0.6" stroke="#3060d8" stroke-width="1.2" fill="none"/><path d="M584 58h5.4l-2.7 3.2z" fill="#3060d8"/><path d="M603 58.4h6.2l2.6 2.6v8.6H603z" fill="url(#gDoc)" stroke="#304868" stroke-width="0.9"/><path d="M609.2 58.4v2.6h2.6" fill="#fff" stroke="#6078a0" stroke-width="0.6"/><path d="M602.2 67.2V59.4c0-2 1.4-3.4 3.4-3.4h2.2c1.6 0 2.8 1.4 2.8 3l0 0.6-3.2-1.4v8.8l-2.6-2.6z" fill="url(#gRib)"/><path d="M602.2 60.4V59.4c0-2 1.4-3.4 3.4-3.4h2.2c1.6 0 2.8 1.4 2.8 3.4l-3.4-2h-2.6c-1.2 0-2.4 1.4-2.4 3z" fill="#0a5a10"/><path d="M603.2 57.6c-0.4-3.8-5.4-3.8-5.2 0.6" stroke="#3060d8" stroke-width="1.2" fill="none"/><path d="M595.4 58h5.4l-2.7 3.2z" fill="#3060d8"/><path d="M620 58.4h6.2l2.6 2.6v8.6H620z" fill="url(#gDoc)" stroke="#304868" stroke-width="0.9"/><path d="M626.2 58.4v2.6h2.6" fill="#fff" stroke="#6078a0" stroke-width="0.6"/><path d="M619.2 67.2V59.4c0-2 1.4-3.4 3.4-3.4h2.2c1.6 0 2.8 1.4 2.8 3l0 0.6-3.2-1.4v8.8l-2.6-2.6z" fill="url(#gRib)"/><path d="M619.2 60.4V59.4c0-2 1.4-3.4 3.4-3.4h2.2c1.6 0 2.8 1.4 2.8 3.4l-3.4-2h-2.6c-1.2 0-2.4 1.4-2.4 3z" fill="#0a5a10"/><path d="M628 63l6.2 6.2M634.2 63l-6.2 6.2" stroke="#f04848" stroke-width="2" stroke-dasharray="1.3 0.45"/><rect x="629.6" y="64.6" width="3" height="3" fill="#f04848"/><path d="M648.4 54.4h5.6l2.6 2.6v9h-8.2z" fill="#d8e0f4" stroke="#8a9cc0" stroke-width="0.9"/><path d="M654 54.4v2.6h2.6" fill="#fff" stroke="#8a9cc0" stroke-width="0.6"/><path d="M642.8 58.4h6.2l2.6 2.6v8.6H642.8z" fill="url(#gDoc)" stroke="#304868" stroke-width="0.9"/><path d="M649.0 58.4v2.6h2.6" fill="#fff" stroke="#6078a0" stroke-width="0.6"/><path d="M642.0 67.2V59.4c0-2 1.4-3.4 3.4-3.4h2.2c1.6 0 2.8 1.4 2.8 3l0 0.6-3.2-1.4v8.8l-2.6-2.6z" fill="url(#gRib)"/><path d="M642.0 60.4V59.4c0-2 1.4-3.4 3.4-3.4h2.2c1.6 0 2.8 1.4 2.8 3.4l-3.4-2h-2.6c-1.2 0-2.4 1.4-2.4 3z" fill="#0a5a10"/><path d="M651 63l6.2 6.2M657.2 63l-6.2 6.2" stroke="#f04848" stroke-width="2" stroke-dasharray="1.3 0.45"/><rect x="652.6" y="64.6" width="3" height="3" fill="#f04848"/><path d="M675.7 58.2v7.6c0 4.2 6.2 4.2 6.2 0V57.4c0-3.6-4.4-3.6-4.4 0v8c0 2 2.4 2 2.4 0V58.2" stroke="#1e3c5e" stroke-width="1.15" fill="none"/><path d="M696.4 58.6h9.4l3.4 8.2v1.8h-11.4l-0.6-1.6h2.4z" fill="url(#gTan)" stroke="#6a3020" stroke-width="1"/><path d="M695.4 56.4h11c1 0 1 2.2 0 2.2h-10c-1.4 0-1.6-1.2-1-2.2z" fill="#e8dcc0" stroke="#6a3020" stroke-width="1"/><path d="M696.6 67h3.4" stroke="#6a3020" stroke-width="0.9"/><path d="M726.6 54.3h9.4l2.6 2.7v12.4h-12z" fill="url(#gDoc)" stroke="#405888" stroke-width="0.9"/><path d="M736 54.3v2.7h2.6" fill="#fff" stroke="#6078a0" stroke-width="0.6"/><path d="M723.4 54.4l7 3.6-7 4z" fill="url(#gPur)" stroke="#304060" stroke-width="0.6"/><path d="M724.4 64.2l4.6 4.4 9-8.8" stroke="#4a86f0" stroke-width="2.9" fill="none"/><rect x="749.7" y="52.6" width="21.6" height="18.8" rx="3.6" fill="url(#gBtn)" stroke="#505050" stroke-width="1.3"/><text x="753.6" y="61.4" font-family="Liberation Sans,sans-serif" font-size="8" fill="#1e3a5c" stroke="#1e3a5c" stroke-width="0.12" textLength="14" lengthAdjust="spacingAndGlyphs">267</text><text x="753.6" y="69.8" font-family="Liberation Sans,sans-serif" font-size="8" fill="#1e3a5c" stroke="#1e3a5c" stroke-width="0.12" textLength="14" lengthAdjust="spacingAndGlyphs">268</text><text x="775.4" y="66" font-family="Liberation Sans,sans-serif" font-size="11" fill="#2848c0" stroke="#2848c0" stroke-width="0.25" textLength="10.4" lengthAdjust="spacingAndGlyphs">ab</text><path d="M786 66.6l3.4-7.6" stroke="#8090a8" stroke-width="1"/><rect x="805" y="54" width="1.2" height="16" fill="#30507a"/><path d="M822 58.2h8.6v-2.4l4.8 3.6-4.8 3.6v-2.4H822z" fill="#5a86e4" stroke="#2838c0" stroke-width="0.9"/><path d="M822 66.6h14" stroke="#305080" stroke-width="1.1" stroke-dasharray="1 1.4"/><rect x="844.6" y="54.5" width="15" height="15" fill="url(#gPane)" stroke="#7a90c4" stroke-width="1"/><path d="M859.6 54.5V69.5H844.6" fill="none" stroke="#4a62a0" stroke-width="1"/><path d="M846.1 56.5h2M849.5 56.5h8.6" stroke="#000" stroke-width="1.1"/><path d="M850.5 58.6h7.6M850.5 60.6h7.6" stroke="#a4aa9c" stroke-width="1"/><path d="M853.5 63.3h4.6M849.5 66.5h8.6" stroke="#000" stroke-width="1.1"/><rect x="867.5" y="54.5" width="15" height="15" fill="url(#gPane)" stroke="#7a90c4" stroke-width="1"/><path d="M882.5 54.5V69.5H867.5" fill="none" stroke="#4a62a0" stroke-width="1"/><path d="M874 56.5h7" stroke="#000" stroke-width="1.1"/><path d="M873.4 58.6h7.6M873.4 60.6h7.6" stroke="#a4aa9c" stroke-width="1"/><path d="M876.4 63.3h4.6M872.4 66.5h8.6" stroke="#000" stroke-width="1.1"/><path d="M868.6 55.8c3-0.4 5.4 1 4.8 3.4l-1 2.4" stroke="#3060d0" stroke-width="1.1" fill="none"/><path d="M867 54.6h3.2l-1 1 0.4 1.6z" fill="#3060d0" stroke="#3060d0" stroke-width="0.6"/><rect x="891.4" y="55.5" width="13" height="4" fill="#fff" stroke="#4070e0" stroke-width="1"/><rect x="892.6" y="56.8" width="1" height="1" fill="#203050"/><rect x="894.8" y="56.8" width="1.8" height="1" fill="#203050"/><path d="M898 57.3h5" stroke="#f08a10" stroke-width="1.1"/><rect x="891.4" y="61.4" width="13" height="6.8" fill="url(#gDoc)" stroke="#90a4d0" stroke-width="0.8"/><path d="M904.4 61.4V68.2H891.4" fill="none" stroke="#5070a8" stroke-width="0.9"/><path d="M893 62.6h2.6M893 64.6h6.6M893 66.6h8.6" stroke="#2a4468" stroke-width="0.9"/><rect x="440.6" y="95.6" width="10" height="10" fill="#fff" stroke="#000" stroke-width="1.25"/><path d="M442.6 100.6h6" stroke="#000" stroke-width="1.1"/><path d="M445.5 106.2V275.5H451" stroke="#000" stroke-width="1.1" fill="none"/></svg></body></html>
